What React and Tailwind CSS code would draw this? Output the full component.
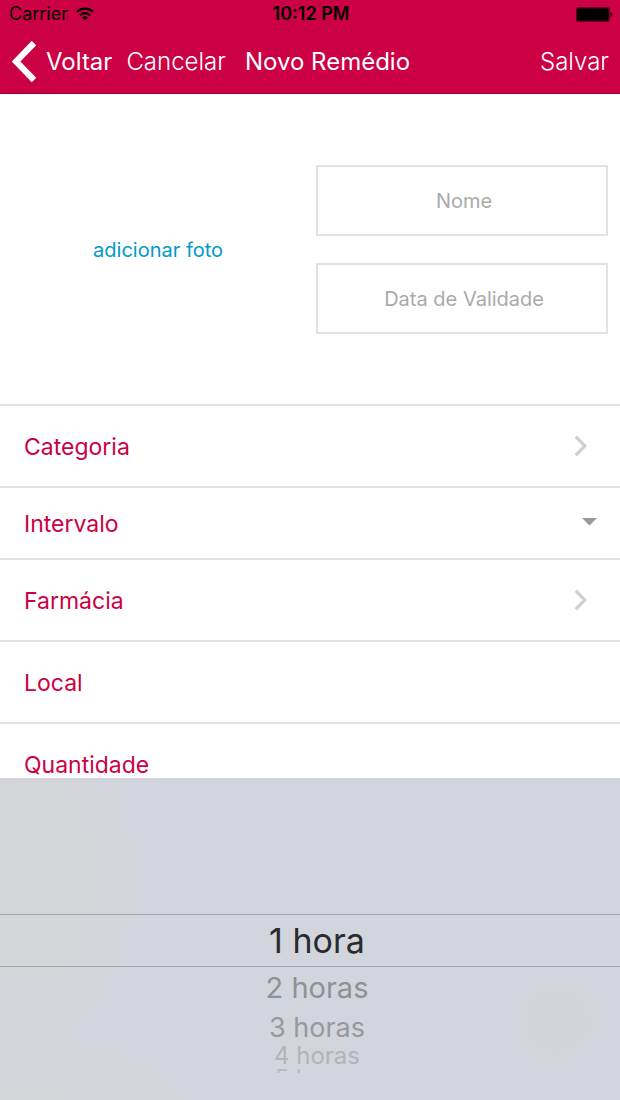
import React, { useState } from "react";

function WifiIcon() {
  return (
    <svg width="18" height="14" viewBox="0 0 18 14" fill="none" stroke="#000" strokeWidth="2.2" aria-hidden="true">
      <path d="M1 4.700a11.800 11.800 0 0 1 16 0" />
      <path d="M4 8.200a7.200 7.200 0 0 1 10 0" />
      <path d="M9 13.400 6.200 10.500a4 4 0 0 1 5.600 0Z" fill="#000" stroke="none" />
    </svg>
  );
}

function BatteryIcon() {
  return (
    <svg width="37" height="15" viewBox="0 0 37 15" aria-hidden="true">
      <rect x="0" y="0" width="34" height="15" rx="2" fill="#66001f" />
      <rect x="1" y="1.5" width="31.5" height="12" rx="1" fill="#000" />
      <path d="M34.5 5c1.4.4 2 1.300 2 2.500s-.6 2.100-2 2.500Z" fill="#33000f" />
    </svg>
  );
}

function Chevron() {
  return (
    <svg width="14" height="22" viewBox="0 0 14 22" fill="none" stroke="#cfcfcf" strokeWidth="3.200" aria-hidden="true">
      <path d="M1.700 1.700 10.800 11 1.700 20.300" />
    </svg>
  );
}

function Row({ label, kind, expanded, onClick }) {
  return (
    <li className="border-t-2 border-[#e2e2e2]">
      <button
        type="button"
        onClick={onClick}
        aria-expanded={expanded}
        className={
          kind === "select"
            ? "flex h-[70px] w-full items-center justify-between pr-[23px] pl-6 text-left"
            : "flex h-20 w-full items-center justify-between pr-8 pl-6 text-left"
        }
      >
        <span className="pt-0.5 text-[23px] leading-8 text-[#cc0044]">{label}</span>
        {kind === "link" && <Chevron />}
        {kind === "select" && (
          <svg width="15" height="14" viewBox="0 0 15 14" fill="#999" aria-hidden="true">
            <path d="M0 2h15L7.500 9.500Z" />
          </svg>
        )}
      </button>
    </li>
  );
}

const options = [
  { label: "1 hora", look: "h-[53px] border-y border-[#a4a6aa] text-[34px] text-[#2a2b2d]" },
  { label: "2 horas", look: "h-10 text-[29px] text-[#8f9195]" },
  { label: "3 horas", look: "h-10 text-[27px] text-[#97999d]" },
  { label: "4 horas", look: "h-[18px] text-[24px] text-[#b2b4b9]" },
];

export default function App() {
  const [open, setOpen] = useState(true);

  return (
    <div className="flex h-screen flex-col overflow-hidden bg-white font-['Inter','Liberation_Sans',sans-serif]">
      <header className="shrink-0 border-b border-[#9c0034] bg-[#cc0044]">
        <div className="grid h-7 grid-cols-3 items-center pr-[7px] pl-[9px] text-[18px] leading-6 text-black">
          <div className="flex items-center gap-2">
            <span>Carrier</span>
            <WifiIcon />
          </div>
          <span className="text-center font-semibold">10:12 PM</span>
          <div className="flex justify-end">
            <BatteryIcon />
          </div>
        </div>
        <nav className="flex h-[65px] items-center pt-0.5 pr-[11px] pl-3 text-[24px] leading-8 text-white">
          <button type="button" className="flex items-center gap-[10px]">
            <svg width="24" height="42" viewBox="0 0 24 42" fill="none" stroke="#fff" strokeWidth="6.200" aria-hidden="true">
              <path d="M22 2 4 20.500l18 18.500" />
            </svg>
            <span>Voltar</span>
          </button>
          <button type="button" className="ml-[14px] font-light">
            Cancelar
          </button>
          <h1 className="ml-[19px]">Novo Remédio</h1>
          <button type="button" className="ml-auto font-light">
            Salvar
          </button>
        </nav>
      </header>

      <main className="min-h-0 flex-1 overflow-hidden">
        <section className="flex h-[310px] items-center pt-px pr-3">
          <div className="flex w-[52%] justify-center">
            <button type="button" className="text-[20px] leading-7 text-[#0099cc]">
              adicionar foto
            </button>
          </div>
          <form className="flex flex-1 flex-col gap-[27px]">
            <input
              type="text"
              aria-label="Nome"
              placeholder="Nome"
              className="h-[71px] w-full border-2 border-[#e2e2e2] pl-1 text-center text-[20px] text-black outline-none placeholder:text-[#aaaaaa]"
            />
            <input
              type="text"
              aria-label="Data de Validade"
              placeholder="Data de Validade"
              className="h-[71px] w-full border-2 border-[#e2e2e2] pl-1 text-center text-[20px] text-black outline-none placeholder:text-[#aaaaaa]"
            />
          </form>
        </section>
        <ul>
          <Row label="Categoria" kind="link" />
          <Row label="Intervalo" kind="select" expanded={open} onClick={() => setOpen(!open)} />
          <Row label="Farmácia" kind="link" />
          <Row label="Local" />
          <Row label="Quantidade" />
        </ul>
      </main>

      {open && (
        <fieldset className="h-[322px] min-w-0 shrink-0 bg-[#d2d5dd] bg-[radial-gradient(ellipse_110px_180px_at_30px_100px,#d4d5d8_0%,#d3d5d9_60%,transparent_100%),radial-gradient(ellipse_150px_60px_at_40px_320px,#d4d5d8_0%,transparent_100%),radial-gradient(ellipse_50px_50px_at_558px_244px,#d2d4d9_0%,transparent_100%)] pt-[136px]">
          {options.map((o, i) => (
            <label key={o.label} className={`flex items-center justify-center pl-[14px] leading-none ${o.look}`}>
              <input type="radio" name="intervalo" defaultChecked={i === 0} className="sr-only" />
              {o.label}
            </label>
          ))}
          <label className="mt-1 flex h-1 items-start justify-center overflow-hidden pl-[14px] text-[24px] leading-5 text-[#b8babf]">
            <input type="radio" name="intervalo" className="sr-only" />
            5 horas
          </label>
        </fieldset>
      )}
    </div>
  );
}
